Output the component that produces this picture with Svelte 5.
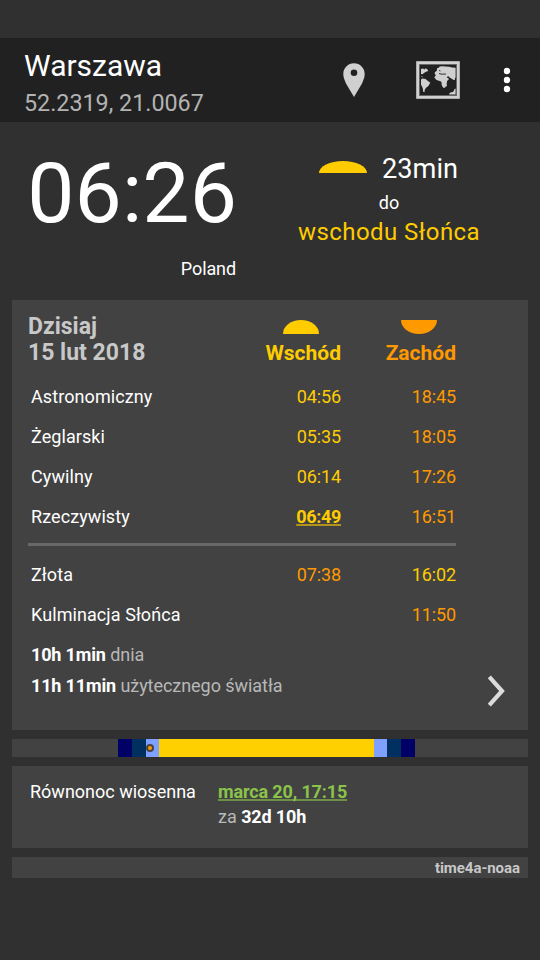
<script>
  const events = [
    { name: 'Astronomiczny', rise: '04:56', set: '18:45' },
    { name: 'Żeglarski', rise: '05:35', set: '18:05' },
    { name: 'Cywilny', rise: '06:14', set: '17:26' },
    { name: 'Rzeczywisty', rise: '06:49', set: '16:51', next: true },
  ];
  const segments = [
    { color: '#424242', width: 106 },
    { color: '#000066', width: 14 },
    { color: '#003060', width: 14 },
    { color: '#80a0ff', width: 13 },
    { color: '#ffd000', width: 215 },
    { color: '#80a0ff', width: 13 },
    { color: '#003060', width: 14 },
    { color: '#000066', width: 14 },
  ];
</script>

<div class="screen">
  <header>
    <div class="place">
      <div class="city">Warszawa</div>
      <div class="coords">52.2319, 21.0067</div>
    </div>
    <svg class="pin" width="22" height="36" viewBox="0 0 22 36">
      <path fill="#d0d0d0" fill-rule="evenodd" d="M11 1.200C5 1.200.3 6 .3 12c0 3.200 1.300 6.300 2.700 9.500L11 35l8-13.500c1.400-3.200 2.700-6.300 2.700-9.500C21.700 6 17 1.200 11 1.200zM11 7.400a3.300 3.300 0 1 1 0 6.600a3.300 3.300 0 0 1 0-6.600z" />
    </svg>
    <svg class="map" width="44" height="38" viewBox="0 0 44 38">
      <rect x="1.700" y="1.700" width="40.600" height="34.600" fill="none" stroke="#d0d0d0" stroke-width="3" />
      <rect x="3.500" y="3.500" width="37" height="31" fill="none" stroke="#777" stroke-width=".7" />
      <g fill="#d0d0d0">
        <path d="M5 8l2-.5 1.500 1 1-1.300 1.500.8 1.300 2-2.300.8-2 1.200-1.500 1.300L5 13zM5 15l1.600.5-.4 1zM5 18.500l1.500-.9 3 .5 1.800 1.500 3 2.200-2 3.300-2.500 1.800-1.300 2.500.2 1.500H7.300l-.6-4L5 23.500z" />
        <path d="M18.300 16.500l1.700-2.500-1.200-.8v-2l2-1.500.3-2.500 2-.8.5-.9 3-.3 3 .4 3.500.2 3 .8 3.500.2v9.700l-.6.8v1.500l-1.400.3-1.500-1.200-1.200-.6-1.300-.8-1.200-1.200-1.800.6 1 1.200 1.500.8-2 2.200-.6 4-1.500 2.600h-1.800l-1.400-2.500-.4-3.500-2.400-1-2.500-.6z" />
        <path d="M39.600 27.500v6h-6.500l.7-1.800 3.500-1 1.300-2.700z" />
        <path d="M30.500 23l.5 1.200-.7 1.600-.6-.8z" />
      </g>
      <path d="M23 12.600l3 .6 4-.2M23.500 9l.6 1.300" fill="none" stroke="#222" stroke-width=".9" />
    </svg>
    <svg class="more" width="8" height="26" viewBox="0 0 8 26">
      <circle cx="4" cy="4" r="3.200" fill="#fff" />
      <circle cx="4" cy="13" r="3.200" fill="#fff" />
      <circle cx="4" cy="22" r="3.200" fill="#fff" />
    </svg>
  </header>

  <section class="now">
    <div class="clock">
      <div class="time">06:26</div>
      <div class="zone">Poland</div>
    </div>
    <div class="next">
      <div class="remaining">
        <svg width="48" height="12" viewBox="0 0 48 12"><ellipse cx="24" cy="12" rx="24" ry="12" fill="#ffcc00" /></svg>
        <span>23min</span>
      </div>
      <div class="to">do</div>
      <div class="event">wschodu Słońca</div>
    </div>
  </section>

  <section class="card day">
    <div class="head">
      <div class="date">Dzisiaj<br />15 lut 2018</div>
      <div class="col rise">
        <svg width="36" height="14" viewBox="0 0 36 14"><ellipse cx="18" cy="14" rx="18" ry="14" fill="#ffcc00" /></svg>
        <b>Wschód</b>
      </div>
      <div class="col set">
        <svg width="36" height="14" viewBox="0 0 36 14"><ellipse cx="18" cy="0" rx="18" ry="14" fill="#ff9900" /></svg>
        <b>Zachód</b>
      </div>
    </div>
    {#each events as e}
      <div class="row">
        <span class="label">{e.name}</span>
        <span class="val rise" class:active={e.next}>{e.rise}</span>
        <span class="val set">{e.set}</span>
      </div>
    {/each}
    <div class="divider"></div>
    <div class="row">
      <span class="label">Złota</span>
      <span class="val set">07:38</span>
      <span class="val rise">16:02</span>
    </div>
    <div class="row">
      <span class="label">Kulminacja Słońca</span>
      <span class="val set">11:50</span>
    </div>
    <div class="foot">
      <div class="lengths">
        <div><b>10h 1min</b> dnia</div>
        <div><b>11h 11min</b> użytecznego światła</div>
      </div>
      <svg width="20" height="34" viewBox="0 0 20 34"><path d="M3.300 2.800L16 17L3.300 31.200" fill="none" stroke="#dcdcdc" stroke-width="4.200" /></svg>
    </div>
  </section>

  <div class="card bar">
    {#each segments as s}
      <i style="width:{s.width}px;background:{s.color}"></i>
    {/each}
    <span class="marker"></span>
  </div>

  <section class="card season">
    <span class="name">Równonoc wiosenna</span>
    <div>
      <div class="when"><b>marca 20, 17:15</b></div>
      <div class="in">za <b>32d 10h</b></div>
    </div>
  </section>

  <div class="card source">time4a-noaa</div>
</div>

<style>
  :global(body) { background: #303030; }
  .screen {
    width: 540px;
    height: 960px;
    padding-top: 38px;
    box-sizing: border-box;
    overflow: hidden;
    background: #303030;
    color: #fff;
    font-family: Roboto, sans-serif;
    font-size: 18px;
    white-space: nowrap;
  }
  svg { display: block; flex: none; }
  header {
    height: 84px;
    background: #212121;
    display: flex;
    align-items: center;
  }
  .place { width: 343px; padding-left: 24px; box-sizing: border-box; align-self: flex-start; padding-top: 10px; }
  .city { font-size: 30px; line-height: 36px; }
  .coords { margin-top: 5px; font-size: 23.300px; line-height: 28px; color: #b3b3b3; }
  .map { margin-left: 51px; }
  .more { margin-left: 43px; }
  .now { display: flex; height: 178px; }
  .clock { width: 236px; padding-top: 22px; text-align: right; }
  .time { font-size: 84px; line-height: 100px; margin-right: -1px; letter-spacing: .1px; }
  .zone { margin-top: 13px; line-height: 24px; letter-spacing: -.1px; }
  .next { margin-left: 62px; padding-top: 30px; width: 182px; text-align: center; }
  .remaining { display: flex; align-items: center; gap: 15px; padding-left: 21px; height: 32px; font-size: 27.200px; line-height: 32px; }
  .remaining svg { margin-bottom: 2px; }
  .remaining span { padding-top: 2px; }
  .to { margin-top: 7px; line-height: 24px; }
  .event { margin: 2px -10px 0; font-size: 24px; line-height: 30px; letter-spacing: .45px; color: #ffcc00; }
  .card { margin: 0 12px; background: #424242; }
  .day { height: 430px; box-sizing: border-box; padding: 13px 72px 0 16px; }
  .head { display: flex; height: 64px; }
  .date { width: 198px; padding-top: 1px; font-size: 23px; line-height: 26px; font-weight: 700; color: #c8c8c8; }
  .col { width: 115px; padding-top: 7px; display: flex; flex-direction: column; align-items: flex-end; font-size: 21px; line-height: 24px; }
  .col svg { margin: 0 22px 7px 0; }
  .col.set svg { margin-right: 19px; }
  .rise { color: #ffcc00; }
  .set { color: #ff9900; }
  .row { display: flex; line-height: 40px; height: 40px; }
  .label { margin-left: 3px; flex: 1; letter-spacing: .08px; }
  .val { width: 115px; text-align: right; letter-spacing: -.12px; }
  .val.active { font-weight: 700; letter-spacing: -.32px; text-decoration: underline rgba(255, 204, 0, .6) 2px; text-underline-offset: 1px; text-decoration-skip-ink: none; }
  .divider { height: 3px; background: #686868; margin: 6px 0 9px; }
  .foot { display: flex; justify-content: space-between; align-items: flex-end; margin: 4px -50px 0 3px; line-height: 31px; color: #b8b8b8; letter-spacing: -.05px; }
  .foot svg { margin-bottom: -7px; }
  .foot b, .in b { color: #fff; letter-spacing: -.15px; }
  .bar { position: relative; display: flex; height: 18px; margin-top: 9px; margin-bottom: 9px; }
  .marker { position: absolute; left: 134px; top: 5px; width: 8px; height: 8px; box-sizing: border-box; border: 2px solid #444; border-radius: 50%; background: #ff9900; }
  .season { display: flex; height: 82px; box-sizing: border-box; padding: 13px 0 0 18px; line-height: 25px; }
  .name { width: 188px; }
  .when { color: #8bc34a; letter-spacing: -.13px; text-decoration: underline rgba(139, 195, 74, .6) 2px; text-underline-offset: 1px; text-decoration-skip-ink: none; }
  .in { color: #b8b8b8; }
  .source { margin-top: 9px; height: 21px; padding-right: 8px; text-align: right; font-size: 15px; line-height: 22px; letter-spacing: -.05px; font-weight: 700; color: #c8c8c8; }
</style>
